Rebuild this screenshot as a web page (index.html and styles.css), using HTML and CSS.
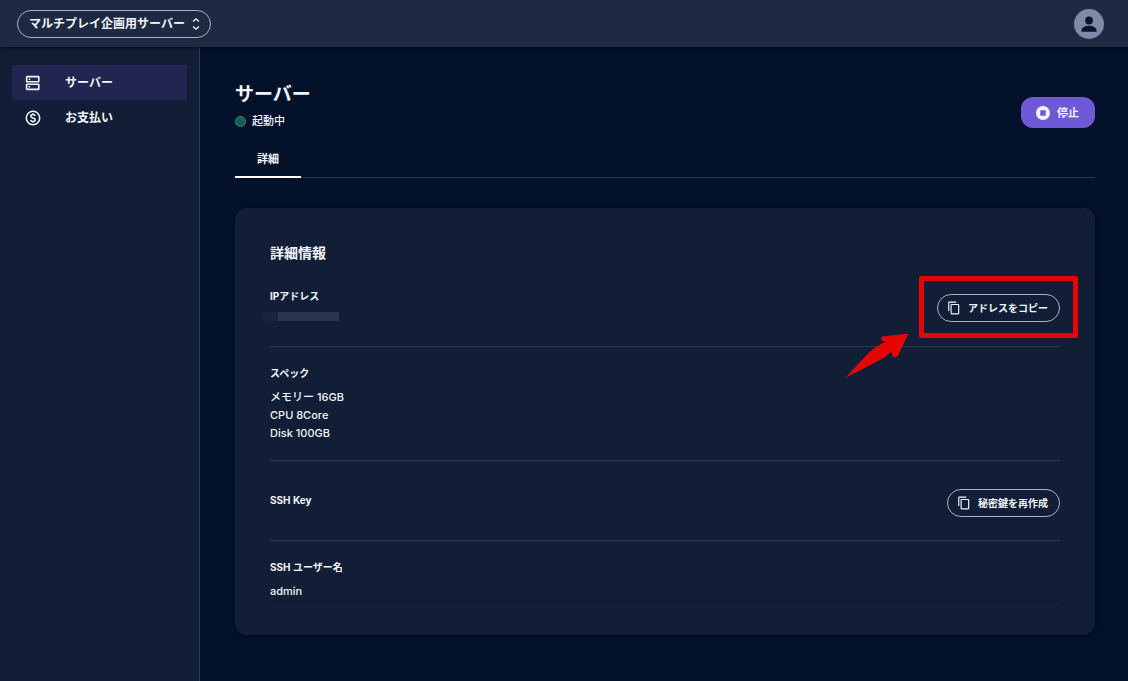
FILE: index.html
```html
<!doctype html>
<html lang="ja">
  <head>
    <meta charset="UTF-8">
    <title>サーバー</title>
    <meta name="viewport" content="width=device-width, initial-scale=1">
    <link rel="stylesheet" href="styles.css">
  </head>
  <body>
    <!-- shared icon shapes -->
    <svg class="sprite" aria-hidden="true">
      <symbol id="copy" viewBox="0 0 24 24">
        <path fill="currentColor" d="M16 1H4a2 2 0 0 0-2 2v14h2V3h12V1zm3 4H8a2 2 0 0 0-2 2v14a2 2 0 0 0 2 2h11a2 2 0 0 0 2-2V7a2 2 0 0 0-2-2zm0 16H8V7h11v14z"/>
      </symbol>
    </svg>

    <header class="topbar">
      <button type="button" class="pill picker">
        マルチプレイ企画用サーバー
        <svg viewBox="0 0 10 14" width="10" height="14" fill="none" stroke="currentColor" stroke-width="1.3"><path d="M2 4.6 5 1.8 8 4.6M2 9.4 5 12.2 8 9.4"/></svg>
      </button>
      <button type="button" class="avatar" aria-label="アカウント">
        <svg viewBox="0 0 30 30" width="30" height="30" fill="#0b1530"><circle cx="15" cy="11.5" r="3.9"/><path d="M7.5 22.8v-1.6c0-3 4.6-4.4 7.5-4.4s7.5 1.4 7.5 4.4v1.6z"/></svg>
      </button>
    </header>

    <div class="layout">
      <nav class="sidebar">
        <a href="#server" class="nav_item active">
          <svg viewBox="0 0 16 16" width="16" height="16" fill="none" stroke="currentColor" stroke-width="1.6"><rect x="1.6" y="1.6" width="12.2" height="5.2" rx=".5"/><rect x="1.6" y="9.2" width="12.2" height="5.2" rx=".5"/><path d="M3.6 4.2h1.6M3.6 11.8h1.6"/></svg>
          サーバー
        </a>
        <a href="#payment" class="nav_item">
          <svg viewBox="0 0 16 16" width="16" height="16" fill="none" stroke="currentColor" stroke-width="1.5"><circle cx="8" cy="8" r="6.7"/><path d="M10.2 6c-.2-1-1.1-1.5-2.2-1.5-1.2 0-2.2.6-2.2 1.7 0 2.4 4.5 1.2 4.500 3.600 0 1.100-1 1.700-2.300 1.700S5.800 10.900 5.600 9.800M8 3.200v1.300M8 11.500v1.300"/></svg>
          お支払い
        </a>
      </nav>

      <main>
        <div class="page_head">
          <div>
            <h1>サーバー</h1>
            <p class="status">起動中</p>
          </div>
          <button type="button" class="stop">
            <svg viewBox="0 0 14 14" width="14" height="14"><path fill="currentColor" fill-rule="evenodd" d="M7 0a7 7 0 1 0 0 14A7 7 0 0 0 7 0zM4.300 4.300h5.400v5.400H4.300z"/></svg>
            停止
          </button>
        </div>

        <div class="tabs">
          <a href="#detail" class="tab">詳細</a>
        </div>

        <section class="card">
          <h2>詳細情報</h2>

          <div class="row address">
            <div>
              <h3>IPアドレス</h3>
              <div class="masked"></div>
            </div>
            <div class="marked">
              <button type="button" class="pill copy"><svg width="14" height="14"><use href="#copy"/></svg>アドレスをコピー</button>
              <svg class="arrow" viewBox="4 4 66 48" width="66" height="48"><path fill="#e60505" d="M5 50 29 24.500Q36 18 46 13.500L43 13Q39.500 11 42 8.500L68.500 5.500 58 27.500Q55 31 52.500 28L51.500 23.500Q46 29 38 33Z"/></svg>
            </div>
          </div>

          <div class="row">
            <div>
              <h3>スペック</h3>
              <ul>
                <li>メモリー 16GB</li>
                <li>CPU 8Core</li>
                <li>Disk 100GB</li>
              </ul>
            </div>
          </div>

          <div class="row key">
            <h3>SSH Key</h3>
            <button type="button" class="pill copy"><svg width="14" height="14"><use href="#copy"/></svg>秘密鍵を再作成</button>
          </div>

          <div class="row user">
            <div>
              <h3>SSH ユーザー名</h3>
              <p>admin</p>
            </div>
          </div>
        </section>
      </main>
    </div>
  </body>
</html>
```
FILE: styles.css
```css
* { box-sizing: border-box; }
body {
  margin: 0;
  min-height: 100vh;
  display: flex;
  flex-direction: column;
  background: #03112b;
  color: #f1f5fb;
  font: 500 11px/18px Inter, "Noto Sans CJK JP", sans-serif;
}
h1, h2, h3, p, ul { margin: 0; padding: 0; }
ul { list-style: none; }
a { color: inherit; text-decoration: none; }
button { font: inherit; color: inherit; border: 0; padding: 0; cursor: pointer; }
svg { display: block; flex: none; }
.sprite { position: absolute; width: 0; height: 0; }

.topbar {
  display: flex;
  align-items: center;
  justify-content: space-between;
  height: 47px;
  padding: 0 24px 0 17px;
  background: #1e2a41;
  box-shadow: 0 1px 4px #000a;
  z-index: 1;
}
.pill {
  display: flex;
  align-items: center;
  height: 28px;
  border: 1px solid #a9b4c9;
  border-radius: 14px;
  background: none;
  font-weight: 700;
}
.picker { gap: 6px; padding: 0 9px 0 11px; font-size: 12px; }
.avatar { width: 30px; height: 30px; border-radius: 50%; background: #8089a6; }

.layout { flex: 1; display: flex; }
.sidebar {
  width: 200px;
  flex: none;
  padding: 18px 12px;
  background: #111e35;
  border-right: 1px solid #2e3a50;
}
.nav_item {
  display: flex;
  align-items: center;
  gap: 24px;
  height: 35px;
  padding: 0 13px;
  font-size: 12px;
  font-weight: 700;
}
.active { background: #20264f; }

main { flex: 1; padding: 32px 33px 46px 35px; }
.page_head { display: flex; align-items: flex-end; justify-content: space-between; }
h1 { font-size: 19px; line-height: 32px; font-weight: 700; }
.status { display: flex; align-items: center; gap: 6px; margin-top: 1px; }
.status::before {
  content: "";
  width: 9px;
  height: 9px;
  border: 1px solid #3f8478;
  border-radius: 50%;
  background: #155e52;
}
.stop {
  display: flex;
  align-items: center;
  gap: 7px;
  height: 31px;
  margin-bottom: 2px;
  padding: 0 16px 0 15px;
  border-radius: 12px;
  background: #7059d6;
  font-weight: 700;
}

.tabs { display: flex; margin-top: 11px; border-bottom: 1px solid #2b374e; }
.tab {
  margin-bottom: -1px;
  padding: 9px 22px 8px;
  border-bottom: 2px solid #fff;
  font-weight: 700;
}

.card {
  margin-top: 30px;
  padding: 35px 35px 34px;
  border-radius: 12px;
  background: #111e35;
  box-shadow: 0 1px 4px #0008;
}
h2 { font-size: 14px; line-height: 20px; }
h3 { font-size: 10px; line-height: 18px; font-weight: 700; }
.row {
  display: flex;
  align-items: center;
  justify-content: space-between;
  padding: 17px 0 18px;
  border-bottom: 1px solid #2e3a51;
}
.address { align-items: flex-start; padding: 24px 0; }
h3 + ul, h3 + p { margin-top: 6px; }
.key { padding: 28px 0 23px; }
.key h3 { margin-bottom: 6px; }
.user { padding-bottom: 0; border-color: #0c182b; }
.masked {
  width: 77px;
  height: 9px;
  margin: 7px 0 0 -8px;
  background: linear-gradient(to right, #182439 16px, #2a364d 16px);
}
.copy { gap: 7px; padding: 0 11px 0 9px; font-size: 10px; }

/* red frame and arrow drawn over the copy button */
.marked { position: relative; margin-top: 7px; }
.marked::after {
  content: "";
  position: absolute;
  inset: -18px -18px -16px;
  border: 5px solid #e60505;
  border-radius: 2px;
  pointer-events: none;
}
.arrow { position: absolute; right: 150px; top: 38px; }
```
